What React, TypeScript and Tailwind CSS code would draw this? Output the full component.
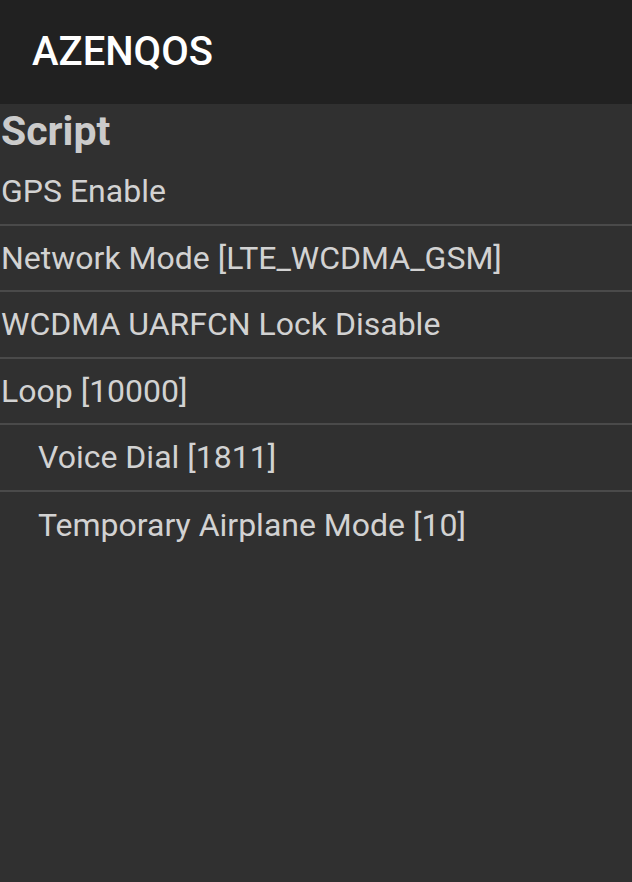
import React from "react";

const items = [
  { label: "GPS Enable", indent: false },
  { label: "Network Mode [LTE_WCDMA_GSM]", indent: false },
  { label: "WCDMA UARFCN Lock Disable", indent: false },
  { label: "Loop [10000]", indent: false },
  { label: "Voice Dial [1811]", indent: true },
  { label: "Temporary Airplane Mode [10]", indent: true },
];

export default function App() {
  return (
    <div
      className="w-[632px] h-[882px] bg-[#303030] flex flex-col overflow-hidden"
      style={{ fontFamily: "Roboto, 'Noto Sans', sans-serif" }}
    >
      <div className="h-[104px] bg-[#212121] flex items-center pl-[32px] shrink-0">
        <h1 className="text-[40px] font-medium text-white leading-none">AZENQOS</h1>
      </div>

      <div className="h-[55px] flex items-center pl-[1px] shrink-0">
        <h2 className="text-[41px] font-bold text-[#cbcbcb] leading-none">Script</h2>
      </div>

      <div className="flex flex-col">
        {items.map((item, i) => (
          <div
            key={item.label}
            className={
              "h-[66.5px] flex items-center text-[32px] text-[#d2d2d2] " +
              (i < items.length - 1 ? "border-b-2 border-[#4a4a4a] " : "") +
              (item.indent ? "pl-[38px]" : "pl-[1px]")
            }
          >
            {item.label}
          </div>
        ))}
      </div>
    </div>
  );
}
